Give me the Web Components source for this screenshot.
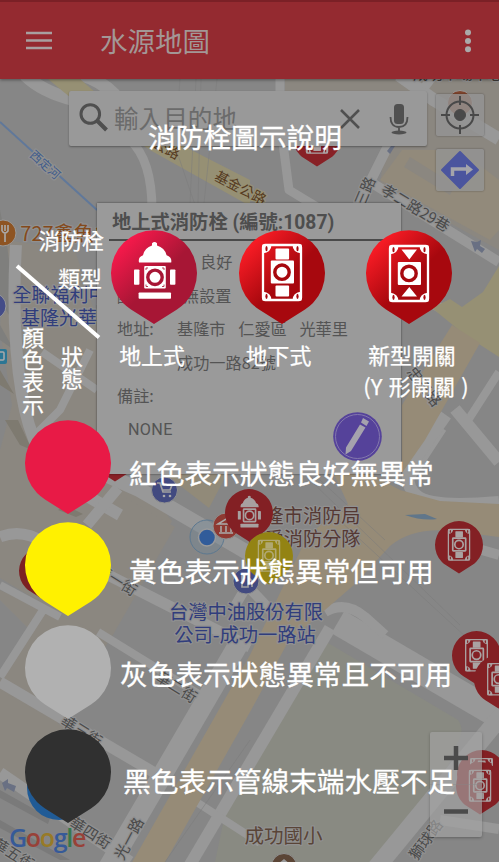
<!DOCTYPE html>
<html lang="zh-Hant">
<head>
<meta charset="utf-8">
<title>水源地圖</title>
<style>
html,body{margin:0;padding:0;background:#868686}
body{width:499px;height:862px;overflow:hidden;font-family:"Noto Sans CJK TC","Noto Sans",sans-serif}
</style>
</head>
<body>
<water-map-app></water-map-app>
<script>
const FONT = '"Noto Sans CJK TC","Noto Sans",sans-serif';
function define(name, html, after) {
  const t = document.createElement('template');
  t.innerHTML = html;
  customElements.define(name, class extends HTMLElement {
    constructor() {
      super();
      this.attachShadow({mode: 'open'}).append(t.content.cloneNode(true));
    }
    connectedCallback() { if (after) after(this); }
  });
}

/* Teardrop marker; kind = hydrant | ground | valve | none */
class HydrantPin extends HTMLElement {
  constructor() { super(); this.attachShadow({mode: 'open'}); }
  connectedCallback() {
    const kind = this.getAttribute('kind') || 'none';
    const fill = this.getAttribute('fill') || '#e81a46';
    const fill2 = this.getAttribute('fill2') || fill;
    const ink = this.getAttribute('ink') || '#fff';
    const w = +(this.getAttribute('size') || 86);
    const lined = this.hasAttribute('lined');
    const box = lined ? `fill="none" stroke="${ink}" stroke-width="3"` : `fill="${ink}"`;
    const ring = (cy, cx = 43) => lined
      ? `<circle cx="${cx}" cy="${cy}" r="7.5" fill="none" stroke="${ink}" stroke-width="3"/>`
      : `<circle cx="${cx}" cy="${cy}" r="7.2" fill="${ink}" stroke="${fill2}" stroke-width="3.4"/>`;
    const corner = (x, y, sx, sy) => `<g transform="translate(${x} ${y}) scale(${sx} ${sy})"><path d="M0 0H9Q9 8 0 9Z" fill="${ink}"/><ellipse cx="4" cy="4.2" rx="1.1" ry="2.6" fill="${fill2}"/></g>`;
    const frame = y => `<rect x="24" y="${y + 1}" width="38" height="55" rx="2.5" fill="none" stroke="${ink}" stroke-width="2.3"/>` +
      corner(23.5, y + .5, 1, 1) + corner(62.5, y + .5, -1, 1) + corner(23.5, y + 56.5, 1, -1) + corner(62.5, y + 56.5, -1, -1);
    const icons = {
      none: '',
      hydrant: `<g fill="${ink}"><path d="M28 32.5Q26.8 27 32 25.2Q33.8 17.8 41 15.6V13.2Q43.5 10.8 46 13.2V15.6Q53.6 17.8 55.6 25.2Q61.2 27 60.2 32.5Z"/><rect x="23" y="39.4" width="5.4" height="15.4" rx=".8"/><rect x="59" y="39.4" width="5.4" height="15.4" rx=".8"/><rect x="27.6" y="62.4" width="32.4" height="6.4" rx=".8"/></g><rect x="33.2" y="36" width="21.6" height="22.4" rx="1" ${box}/>` +
        (lined ? '' : `<path d="M35 40V38H37M51 38H53V40M35 54.500V56.500H37M51 56.500H53V54.500" fill="none" stroke="${fill2}" stroke-width=".8"/>`) + ring(47.3, 44),
      ground: frame(14) + `<rect x="36.500" y="18.400" width="13.600" height="11" rx="1" fill="${ink}"/><rect x="31.800" y="30.600" width="23.200" height="23" rx="1" ${box}/><rect x="36.500" y="55.400" width="13.600" height="11" rx="1" fill="${ink}"/>` + ring(42.2),
      valve: frame(15) + `<path d="M35.500 19.500H51L43.300 29.400ZM35.500 66.500H51L43.300 57Z" fill="${ink}"/><rect x="31.800" y="32" width="23.200" height="23" rx="1" ${box}/>` + ring(43.4)
    };
    this.shadowRoot.innerHTML = `<style>:host{display:block;width:${w}px;height:${w * 94 / 86}px;flex:none}svg{display:block;overflow:visible}</style>
<svg width="${w}" height="${w * 94 / 86}" viewBox="0 0 86 94"><defs><linearGradient id="g" x1=".1" y1=".1" x2=".65" y2=".7"><stop offset=".1" stop-color="${fill}"/><stop offset=".75" stop-color="${fill2}"/></linearGradient></defs>
<path d="M43 94L20 79.500Q15.500 76.500 12 73A43 43 0 1 1 74 73Q70.500 76.500 66 79.500Z" fill="url(#g)"/>${icons[kind]}</svg>`;
  }
}
customElements.define('hydrant-pin', HydrantPin);

define('map-canvas', `<style>
:host{display:block;position:relative;width:499px;height:862px;overflow:hidden;background:#868686}
svg{display:block}
text{font-family:${FONT};text-anchor:middle;dominant-baseline:central;paint-order:stroke;stroke:#909090;stroke-width:2.5px;stroke-linejoin:round}
.st{fill:#4a4a4a;font-size:15px}
.road{fill:none;stroke:#989898;stroke-linejoin:round}
hydrant-pin{position:absolute}
</style>
<svg width="499" height="862" viewBox="0 0 499 862">
<g fill="#8b8780">
 <path d="M285 79H499V250L380 185L385 146H285Z"/>
 <path d="M5 240L75 250L97 320V474L140 480L172 521L112 636L60 720L0 780V680L30 630L0 600V590L70 620L0 578V450L12 405L0 330Z"/>
 <path d="M115 491L175 527L110 640L55 610L35 550L85 527Z"/>
 <path d="M0 690L70 730V758L40 800L0 775Z"/>
</g>
<path d="M402 150H460L499 180V230L490 240L380 180Z" fill="#928a7b"/>
<path d="M410 157L455 185L450 195L404 167Z" fill="#8b8780"/>
<path d="M318 637L458 720Q465 730 458 742L440 785L385 862H215L228 800L268 730Z" fill="#898a82"/>
<path d="M0 210L7 245L18 330L0 300ZM0 340L14 350L0 325Z" fill="#7f7f7d"/>
<g fill="#7e7a70"><path d="M5 420H18L32 450L20 445ZM0 370L14 394L0 385Z"/><path d="M65 505L83 514L76 517L58 510Z"/></g>
<g class="road">
 <path stroke-width="13" d="M25 75Q42 92 75 100M82 75Q100 80 115 95"/>
 <path stroke-width="9" d="M130 140Q152 160 152 210"/>
 <path stroke-width="9" d="M280 79V120L289 190L322 210"/>
 <path stroke-width="13" d="M399 75L434 100L499 139"/>
 <path stroke-width="9" d="M434 75L424 88"/>
 <path stroke-width="10" d="M391 140L368 186L355 210M372 183L499 262"/>
 <path stroke-width="12" d="M16 245Q11 330 22 395T68 485L120 515"/>
 <path stroke-width="8" d="M42 352L97 390M90 350L60 410L30 440"/>
 <path stroke-width="15" d="M95 470L140 490L250 554"/>
 <path stroke-width="11" d="M118 488L87 525M0 537Q22 528 45 543L250 647"/>
 <path stroke-width="8" d="M0 585L60 617M45 607L0 677M98 632L205 698"/>
 <path stroke-width="11" d="M0 682L160 776"/>
 <path stroke-width="12" d="M0 773L130 862"/>
 <path stroke-width="20" d="M238 645L98 885"/>
 <path stroke-width="12" d="M330 628L178 885"/>
 <path stroke-width="8" d="M198 803L260 843M499 372L465 425"/>
 <path stroke-width="26" d="M338 622L499 716"/>
 <path stroke-width="18" d="M510 705L376 868"/>
 <path stroke-width="10" d="M440 820L499 829M275 615L242 580M325 612Q345 600 365 617L385 635M475 548L499 555M442 428L408 480M235 606L262 560"/>
 <path stroke-width="12" d="M446 415L413 462Q402 482 416 495T499 502M455 409L499 462"/>
 <path stroke-width="10" d="M400 285L470 325"/>
</g>
<g fill="#7a7a7a"><path d="M0 790L50 818L48 824L0 798ZM0 820L70 860H60L0 828Z"/></g>
<path d="M48 79H80L96 93L160 134L250 180V206L150 150L71 98Z" fill="#969074"/>
<path d="M432 308L450 299L462 307L483 292L499 266V357L465 335Z" fill="#969074"/>
<path d="M452 325L480 343L425 440L402 473V405Z" fill="#968b77"/>
<path d="M165 474H227L209 508Z" fill="#918a79"/>
<path d="M334 474H370L400 490L440 501L499 504V537L460 532Q415 525 390 546L355 584L288 642L250 712L163 866H130L250 655L308 535L348 504Z" fill="#968b77"/>
<path d="M405 515Q422 521 437 519L425 514Z" fill="#60768a"/>
<g stroke="#7b7b7b" stroke-width=".8" fill="none" opacity=".65"><path d="M180 79L175 146L195 205M196 79L190 203M201 79L198 203M217 79L204 203M310 480L460 625M320 480L385 540M339 520L480 650M250 740L165 862"/></g>
<path d="M0 122L97 210" stroke="#60789a" stroke-width="2"/>
<g fill="#697083"><path d="M471 241L477 242 481 240 480 246 485 249 482 253 477 249 475 252Z"/><path d="M2 783L8 779 8 783 16 786 14 792 7 788 5 791Z"/><path d="M387 151L391 146H395L390 154Z"/></g>
<text transform="translate(46 164) rotate(42)" font-size="12" fill="#405c8c">西定河</text>
<g fill="#553a20"><text transform="translate(241 187) rotate(28)" font-size="14" style="stroke:#969074">基金公路</text><text transform="translate(167 148) rotate(28)" font-size="14" style="stroke:#969074">公路</text></g>
<text class="st" transform="translate(364 191) rotate(-67)">三路</text>
<text class="st" transform="translate(416 207) rotate(31)">孝二路29巷</text>
<text class="st" transform="translate(425 386) rotate(52)">忠三路</text>
<text class="st" transform="translate(117 579) rotate(32)">華一街</text>
<text class="st" transform="translate(177 686) rotate(32)">華二街</text>
<text class="st" transform="translate(82 730) rotate(32)">華三街</text>
<text class="st" transform="translate(91 832) rotate(32)">華四街</text>
<text class="st" transform="translate(14 853) rotate(32)">華五街</text>
<text class="st" transform="translate(128 838) rotate(-62)">光一路</text>
<text class="st" transform="translate(425 839) rotate(-54)">獅球路</text>
<text x="458" y="72" font-size="15" fill="#3f3a37">成功市場中心</text>
<g fill="#303d7c" font-size="19"><text x="60" y="293">全聯福利中</text><text x="59" y="316">基隆光華</text><text x="246" y="611" font-size="19.300">台灣中油股份有限</text><text x="245" y="634" font-size="19.300">公司-成功一路站</text></g>
<g fill="#553833" font-size="19.200"><text x="303" y="515">基隆市消防局</text><text x="303" y="538">仁愛消防分隊</text></g>
<text x="283.500" y="834" font-size="19.500" fill="#594437">成功國小</text>
<text x="67" y="232" font-size="20" fill="#844a1c">727鑫魚火</text>
<circle cx="3" cy="233" r="13" fill="#8e5422" stroke="#999"/><path d="M2 225V231M5 225V231M8 225V231Q5 235 2 231M5 233V242M-1 225V242" stroke="#aaa" stroke-width="1.600" fill="none"/>
<circle cx="-7" cy="306" r="13" fill="#444c88" stroke="#999"/>
<rect x="-8" y="349" width="15" height="15" rx="2" fill="#2c7694"/><rect x="-2" y="352" width="6" height="8" rx="1" fill="none" stroke="#aaa" stroke-width="1.500"/>
<circle cx="460" cy="103" r="12.500" fill="#80452d" stroke="#999"/>
<circle cx="164.500" cy="490" r="13" fill="#424a80" stroke="#909090"/><path d="M157 483H160L163 492H171M160 485H172L170 490H162" fill="none" stroke="#a0a0a0" stroke-width="1.700"/><circle cx="164" cy="496" r="1.300" fill="#aaa"/><circle cx="170" cy="496" r="1.300" fill="#aaa"/>
<circle cx="207" cy="537" r="17" fill="#708897" fill-opacity=".35" stroke="#5c7890"/><circle cx="207" cy="537.500" r="8.500" fill="#315c9a" stroke="#999" stroke-width="1.500"/>
<circle cx="226" cy="526" r="13" fill="#8e3932" stroke="#909090"/><path d="M218 524L226 519L235 524ZM219 533H233M221 526V532M226 526V532M231 526V532" stroke="#aaa" stroke-width="1.500" fill="none"/>
<circle cx="246" cy="581" r="13" fill="#424a80" stroke="#909090"/><path d="M242 575H248V587H242ZM249 578L252 581V587" stroke="#a0a0a0" stroke-width="1.700" fill="none"/>
<circle cx="284" cy="866" r="12.500" fill="#5b4536" stroke="#909090"/><path d="M278 864L284 859L290 864Z" fill="#999"/>
<circle cx="59" cy="788" r="32" fill="#205b96"/>
</svg>
<hydrant-pin style="left:293px;top:114px" kind="ground" lined fill="#882126" ink="#aaa2a2" size="48"></hydrant-pin>
<hydrant-pin style="left:91px;top:429px" kind="ground" lined fill="#882126" ink="#aaa2a2" size="48"></hydrant-pin>
<hydrant-pin style="left:19px;top:547px" fill="#7c2023" size="48"></hydrant-pin>
<hydrant-pin style="left:225px;top:489px" kind="hydrant" lined fill="#832024" ink="#a7a0a0" size="48"></hydrant-pin>
<hydrant-pin style="left:245px;top:532px" kind="ground" lined fill="#938313" ink="#b0a872" size="48"></hydrant-pin>
<hydrant-pin style="left:435px;top:521px" kind="ground" lined fill="#832024" ink="#aaa2a2" size="48"></hydrant-pin>
<hydrant-pin style="left:452px;top:631px" kind="ground" lined fill="#832024" ink="#aaa2a2" size="49"></hydrant-pin>
<hydrant-pin style="left:474px;top:655px" kind="ground" lined fill="#832024" ink="#aaa2a2" size="49"></hydrant-pin>
<hydrant-pin style="left:457px;top:750px" kind="ground" lined fill="#832024" ink="#aaa2a2" size="49"></hydrant-pin>
<hydrant-pin style="left:456px;top:762px" kind="ground" lined fill="#832024" ink="#aaa2a2" size="48"></hydrant-pin>
`);

define('app-bar', `<style>
:host{display:flex;align-items:center;height:77px;border-top:2px solid #7b2026;background:#942a30;box-shadow:0 1px 3px #0006;color:#a39796}
.menu{margin-left:26px;width:26px;height:19px}
h1{margin:0 0 1px 48px;font:400 27.500px/40px ${FONT};flex:1}
.more{margin-right:27px}
svg{display:block}
</style>
<svg class="menu" viewBox="0 0 26 19"><path d="M0 2H26M0 9.500H26M0 17H26" stroke="#a8a0a0" stroke-width="2.600"/></svg>
<h1>水源地圖</h1>
<svg class="more" width="8" height="26" viewBox="0 0 8 26" fill="#aaa"><circle cx="4" cy="4.500" r="3"/><circle cx="4" cy="13" r="3"/><circle cx="4" cy="21.300" r="3"/></svg>`);

define('search-bar', `<style>
:host{display:flex;align-items:center;width:358px;height:55px;border-radius:2px;background:#999;box-shadow:0 1px 2px #0005;flex:none}
span{font:400 24.600px/36px ${FONT};color:#6b6b6b;width:224px;margin:-3px 0 0 6px}
svg{display:block;flex:none}
</style>
<svg style="margin:-3px 0 0 9px" width="30" height="30" viewBox="0 0 30 30" fill="none" stroke="#4f4f4f"><circle cx="12.300" cy="12" r="9.300" stroke-width="3"/><path d="M18.500 18L28.500 28" stroke-width="4"/></svg>
<span>輸入目的地</span>
<svg style="margin-left:1px" width="22" height="22" viewBox="0 0 22 22"><path d="M2 2L20 20M20 2L2 20" stroke="#505050" stroke-width="2.500"/></svg>
<svg style="margin-left:28px" width="20" height="32" viewBox="0 0 20 32"><rect x="5" y="1" width="10" height="20" rx="3.500" fill="#505050"/><path d="M1.500 14Q1.500 24 10 24T18.500 14M10 24V28" fill="none" stroke="#505050" stroke-width="1.800"/><ellipse cx="10" cy="29.500" rx="7.500" ry="1.900" fill="#505050"/></svg>`);

define('map-button', `<style>:host{display:grid;place-items:center;width:48px;height:48px;border-radius:2px;background:#949494cc;box-shadow:0 0 2px #0006}</style><slot></slot>`);

define('zoom-control', `<style>:host{display:flex;flex-direction:column;width:52px;height:105px;border-radius:2px;background:#a2a2a2a8;box-shadow:0 1px 3px #0004}
div{flex:1;display:grid;place-items:center}div+div{border-top:1px solid #8886}</style>
<div><svg width="24" height="24"><path d="M0 12H24M12 0V24" stroke="#4b4b4b" stroke-width="4.500"/></svg></div>
<div><svg width="24" height="5"><path d="M0 2.500H24" stroke="#4b4b4b" stroke-width="4.500"/></svg></div>`);

define('hydrant-card', `<style>
:host{display:block;flex:none;box-sizing:border-box;width:304px;height:271px;padding:5px 14px 0 12px;background:#9a9a9a;box-shadow:0 0 2px #0008;font:400 16.200px/33.600px ${FONT};color:#545454;position:relative}
h2{margin:0 0 4px;padding:0 3px 1px;font:700 19.300px/30px "Roboto","Noto Sans CJK TC",sans-serif;border-bottom:2px solid #4a4a4a;white-space:pre;color:#4e4e4e}
dl{margin:0 0 0 8px;display:grid;grid-template-columns:60px 1fr;grid-auto-rows:33.600px;white-space:pre}
dt,dd{margin:0}
.none{font-family:Roboto,sans-serif;margin-left:19px;letter-spacing:.3px}
svg{position:absolute;left:236px;top:209px}
</style>
<h2>地上式消防栓 (編號:1087)</h2>
<dl><dt>狀態:</dt><dd style="padding-left:23px">良好</dd><dt>配件:</dt><dd style="padding-left:6px">無設置</dd><dt>地址:</dt><dd style="word-spacing:9px">基隆市 仁愛區 光華里</dd><dt></dt><dd>成功一路82號</dd><dt>備註:</dt></dl>
<div class="none">NONE</div>
<svg width="49" height="49" viewBox="0 0 49 49"><circle cx="24.500" cy="24.500" r="24.300" fill="#55429a"/><circle cx="24.500" cy="24.500" r="22" fill="none" stroke="#8377ad" stroke-width="1"/><path d="M30 6L36 9.500L33.500 14L28 10.500ZM27 12.500L32.500 15.500L18 39L12.500 42.500L13 35.500Z" fill="#a5a2ad"/></svg>`);

define('status-row', `<style>
:host{display:flex;width:499px;height:94px;color:#fff;font:400 27.700px/40px ${FONT};-webkit-text-stroke:.3px #fff;white-space:nowrap}
hydrant-pin{margin-left:25px}
span{margin:var(--dy,31px) 0 0 var(--dx,17px)}
</style><hydrant-pin></hydrant-pin><span><slot></slot></span>`, el => {
  const p = el.shadowRoot.querySelector('hydrant-pin');
  p.setAttribute('fill', el.getAttribute('color'));
  p.connectedCallback();
});

define('type-column', `<style>:host{display:flex;flex-direction:column;align-items:center;color:#fff;font:400 21.900px/31px ${FONT};-webkit-text-stroke:.25px #fff}
div{margin:15px 0 0 var(--label-shift,0);white-space:pre}</style><slot name="pin"></slot><div><slot></slot></div>`);

define('legend-axes', `<style>
:host{display:grid;grid-template-columns:1fr;width:111px;height:190px;color:#fff;font:400 21.900px/30px ${FONT};-webkit-text-stroke:.25px #fff}
:host>*{grid-area:1/1}
.type{text-align:right;margin-right:7px;line-height:38px;margin-top:-9px}
.type div+div{margin-right:2px}
.rows{display:flex;gap:17px;margin:96px 0 0 22px;line-height:22.200px}
.rows div{width:22px}.rows div+div{margin-top:19px}
svg{display:block}
</style>
<svg width="111" height="190"><path d="M17 36L99 107.500" stroke="#fff" stroke-width="4"/></svg>
<div class="type"><div>消防栓</div><div>類型</div></div>
<div class="rows"><div>顏色表示</div><div>狀態</div></div>`);

define('legend-overlay', `<style>
:host{display:block;width:499px;height:862px;color:#fff}
h2{margin:0;padding:116px 0 1px 148px;font:400 27.700px/40px ${FONT};-webkit-text-stroke:.3px #fff;height:40px}
.types{display:flex;margin-top:73px;height:190px}
type-column:first-of-type{width:86px;--label-shift:-4px}
type-column:nth-of-type(2){width:86px;margin-left:42px;--label-shift:-7px}
type-column:nth-of-type(3){width:86px;margin-left:41px;--label-shift:14px}
</style>
<h2>消防栓圖示說明</h2>
<div class="types">
<legend-axes></legend-axes>
<type-column><hydrant-pin slot="pin" kind="hydrant" fill="#f3194a" fill2="#a71635"></hydrant-pin>地上式</type-column>
<type-column><hydrant-pin slot="pin" kind="ground" fill="#f51b24" fill2="#a7080e"></hydrant-pin>地下式</type-column>
<type-column><hydrant-pin slot="pin" kind="valve" fill="#f51b24" fill2="#a7080e"></hydrant-pin> 新型開關<br><span style="word-spacing:1px;letter-spacing:.2px">(Y 形開關 )</span></type-column>
</div>
<status-row color="#e81a46" style="--dx:18px;--dy:32px">紅色表示狀態良好無異常</status-row>
<status-row color="#fff100" style="margin-top:8px;--dx:18px;--dy:28px">黃色表示狀態異常但可用</status-row>
<status-row color="#b1b1b1" style="margin-top:9px;--dx:9px;--dy:28px">灰色表示狀態異常且不可用</status-row>
<status-row color="#303030" style="margin-top:10px;--dx:12px;--dy:31px">黑色表示管線末端水壓不足</status-row>`);

define('map-attribution', `<style>:host{display:block;font:600 25px/30px "Open Sans",sans-serif;letter-spacing:-1.300px}</style><span style="color:#365a98">G</span><span style="color:#984138">o</span><span style="color:#987a27">o</span><span style="color:#365a98">g</span><span style="color:#35784b">l</span><span style="color:#984138">e</span>`);

/* Layers share one grid cell: map, controls, then the legend. */
define('water-map-app', `<style>
:host{display:grid;width:499px;height:862px;overflow:hidden}
:host>*{grid-area:1/1}
.ui{display:flex;flex-direction:column;position:relative}
.top{display:flex;gap:9px;padding:12px 0 0 69px;height:100px}
.tools{display:flex;flex-direction:column;gap:13px;padding-top:3px}
hydrant-card{margin:12px 0 0 97px}
.bottom{display:flex;justify-content:space-between;margin:258px 17px 0 9px}
map-attribution{margin-top:90px}
</style>
<map-canvas></map-canvas>
<div class="ui"><app-bar></app-bar>
<div class="top"><search-bar></search-bar><div class="tools">
<map-button><svg width="40" height="40" viewBox="0 0 40 40" fill="none" stroke="#494949"><circle cx="20" cy="20" r="13.500" stroke-width="2"/><circle cx="20" cy="20" r="5.500" fill="#494949"/><path d="M20 1V10M20 30V39M1 20H10M30 20H39" stroke-width="2"/></svg></map-button>
<map-button><svg width="40" height="40" viewBox="0 0 40 40"><path d="M20 2L38 20L20 38L2 20Z" fill="#4b559e" stroke="#4b559e" stroke-width="2" stroke-linejoin="round"/><path d="M12.500 26V19H26" fill="none" stroke="#a4a4aa" stroke-width="3.500"/><path d="M26 14L33 19.500L26 25Z" fill="#a4a4aa"/></svg></map-button>
</div></div>
<hydrant-card></hydrant-card>
<div class="bottom"><map-attribution></map-attribution><zoom-control style="height:105px;align-self:flex-start"></zoom-control></div>
</div>
<legend-overlay style="position:relative"></legend-overlay>`);
</script>
</body>
</html>
